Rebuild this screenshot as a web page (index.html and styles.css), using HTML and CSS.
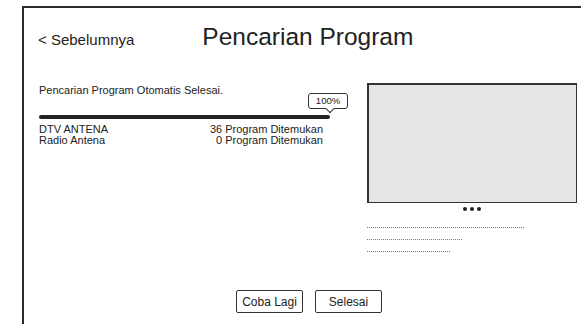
FILE: index.html
```html
<!DOCTYPE html>
<html>
<head>
<meta charset="utf-8">
<link rel="stylesheet" href="styles.css">
</head>
<body>
<div class="frame">
  <div class="header">
    <span class="back">&lt; Sebelumnya</span>
    <h1 class="title">Pencarian Program</h1>
  </div>
  <div class="content">
    <div class="left">
      <p class="status">Pencarian Program Otomatis Selesai.</p>
      <div class="progress">
        <div class="bubble">100%</div>
        <div class="bar"></div>
      </div>
      <div class="row"><span>DTV ANTENA</span><span>36 Program Ditemukan</span></div>
      <div class="row"><span>Radio Antena</span><span>0 Program Ditemukan</span></div>
    </div>
    <div class="right">
      <div class="preview"></div>
      <div class="dots"><i></i><i></i><i></i></div>
      <div class="line l1"></div>
      <div class="line l2"></div>
      <div class="line l3"></div>
    </div>
  </div>
  <div class="actions">
    <button class="btn">Coba Lagi</button>
    <button class="btn">Selesai</button>
  </div>
</div>
</body>
</html>
```
FILE: styles.css
```css
html, body {
  margin: 0;
  padding: 0;
  background: #fff;
  overflow: hidden;
}
body {
  font-family: "Liberation Sans", Arial, sans-serif;
  color: #222;
}
.frame {
  margin: 6px 0 0 22px;
  border-left: 2px solid #2a2a2a;
  border-top: 2px solid #2a2a2a;
  height: 330px;
  box-sizing: border-box;
}
.header {
  display: flex;
  align-items: baseline;
  padding: 15px 0 0 14px;
  height: 50px;
  box-sizing: border-box;
}
.back {
  font-size: 15px;
}
.title {
  margin: 0 0 0 68px;
  font-size: 24.5px;
  font-weight: normal;
}
.content {
  display: flex;
  padding: 26px 0 0 15px;
  height: 230px;
  box-sizing: border-box;
}
.left {
  width: 284px;
  font-size: 11px;
  line-height: 11px;
}
.status {
  margin: 0;
  line-height: 13px;
}
.progress {
  position: relative;
  height: 27px;
}
.bar {
  position: absolute;
  left: 0;
  top: 18px;
  width: 291px;
  height: 4px;
  border-radius: 2px;
  background: #222;
}
.bubble {
  position: absolute;
  left: 269px;
  top: -4px;
  width: 38px;
  height: 14px;
  border: 1px solid #333;
  border-radius: 3px;
  background: #fff;
  font-size: 9.5px;
  line-height: 14px;
  text-align: center;
  box-sizing: content-box;
}
.bubble::after {
  content: "";
  position: absolute;
  left: 18px;
  bottom: -4px;
  width: 5px;
  height: 5px;
  background: #fff;
  border-right: 1px solid #333;
  border-bottom: 1px solid #333;
  transform: rotate(45deg);
}
.row {
  display: flex;
  justify-content: space-between;
}
.right {
  margin-left: 44px;
  display: flex;
  flex-direction: column;
}
.preview {
  margin-top: -1px;
  width: 207px;
  height: 117px;
  background: #e6e6e6;
  border: 1px solid #333;
  border-top-width: 2px;
  border-left-width: 2px;
}
.dots {
  display: flex;
  justify-content: center;
  gap: 3px;
  width: 209px;
  margin-top: 4px;
  height: 10px;
}
.dots i {
  width: 4px;
  height: 4px;
  border-radius: 50%;
  background: #222;
}
.line {
  border-top: 1px dotted #777;
  height: 0;
}
.l1 { width: 157px; margin-top: 10px; }
.l2 { width: 95px; margin-top: 11px; }
.l3 { width: 83px; margin-top: 11px; }
.actions {
  display: flex;
  gap: 12px;
  padding-left: 212px;
  padding-top: 2px;
}
.btn {
  font-family: "Liberation Sans", Arial, sans-serif;
  font-size: 12px;
  color: #222;
  background: #fff;
  border: 1px solid #333;
  border-radius: 2px;
  width: 67px;
  height: 23px;
  padding: 0;
}
```
